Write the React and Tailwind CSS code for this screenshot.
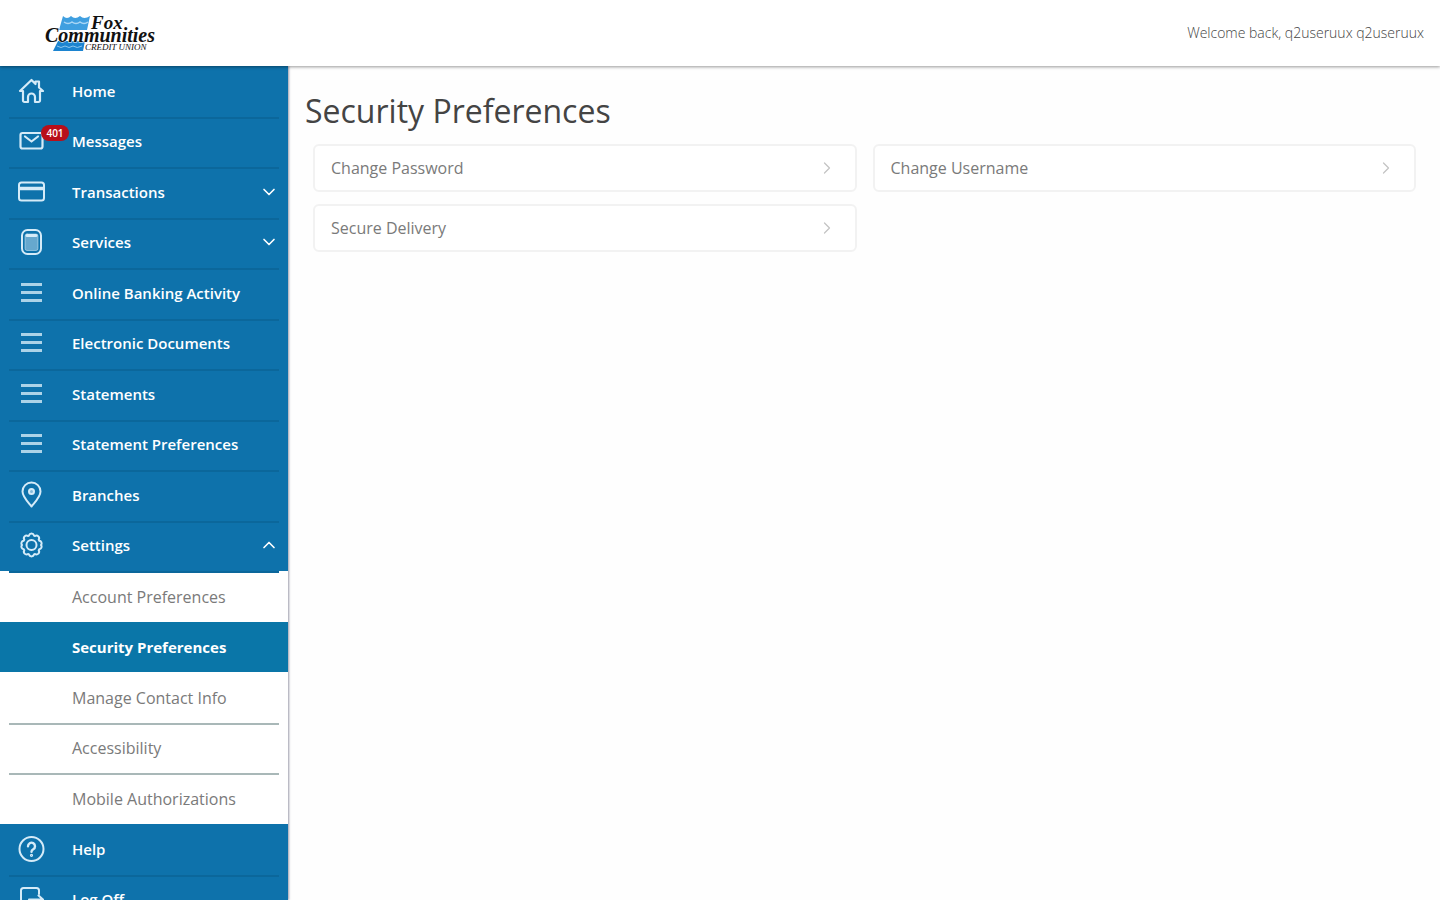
import React from 'react';
import clsx from 'clsx';
import { ChevronDown, ChevronRight, ChevronUp } from 'lucide-react';

const Icon = ({ children }) => (
  <svg
    viewBox="0 0 28 28"
    className="w-7 h-7 shrink-0"
    fill="none"
    stroke="currentColor"
    strokeWidth="2"
    strokeLinecap="round"
    strokeLinejoin="round"
    aria-hidden="true"
  >
    {children}
  </svg>
);

const HomeIcon = () => (
  <Icon>
    <path d="M3 14 14.500 3l4 4V4.500h3.500V10.500L26 14h-3v9.500a1.500 1.500 0 0 1-1.500 1.500H18v-5a3.500 3.500 0 0 0-7 0v5H7.500A1.500 1.500 0 0 1 6 23.500V14Z" strokeWidth="2.200" />
  </Icon>
);

const MailIcon = () => (
  <Icon>
    <rect x="3.500" y="6" width="22" height="15.500" rx="2" strokeWidth="2.200" />
    <path d="m8 9.500 6.500 5 6.500-5" strokeWidth="2.200" />
  </Icon>
);

const CardIcon = () => (
  <Icon>
    <rect x="2" y="4.500" width="25" height="18" rx="2.500" />
    <path d="M3 10.500h23" strokeWidth="3.500" />
  </Icon>
);

const CalculatorIcon = () => (
  <Icon>
    <rect x="5" y="2" width="19" height="24" rx="5.500" />
    <rect x="8" y="6" width="13" height="16.500" rx="2" fill="currentColor" fillOpacity="0.45" strokeWidth="1" strokeOpacity="0.5" />
    <path d="M10 7.500h9" strokeWidth="3" />
  </Icon>
);

const ListIcon = () => (
  <Icon>
    <path d="M4 5.500h21M4 13.500h21M4 21.500h21" strokeLinecap="butt" strokeWidth="3" strokeOpacity="0.8" />
  </Icon>
);

const PinIcon = () => (
  <Icon>
    <path d="M14.500 25.500C10 20 5.500 15.500 5.500 10.500a9 9 0 0 1 18 0c0 5-4.500 9.500-9 15Z" />
    <circle cx="14.500" cy="10.500" r="2.500" fill="currentColor" fillOpacity="0.6" />
  </Icon>
);

// Eight rounded teeth around a ring and a small hub
const GearIcon = () => (
  <Icon>
    <path
      d="M12 4.500a2.600 2.600 0 0 1 5 0l1.100.5a2.600 2.600 0 0 1 3.600 3.600l.5 1.100a2.600 2.600 0 0 1 1.800 4.300a2.600 2.600 0 0 1-1.800 4.300l-.5 1.100a2.600 2.600 0 0 1-3.600 3.600l-1.100.5a2.600 2.600 0 0 1-5 0l-1.100-.5a2.600 2.600 0 0 1-3.600-3.600l-.5-1.100a2.600 2.600 0 0 1-1.800-4.300a2.600 2.600 0 0 1 1.800-4.300l.5-1.100a2.600 2.600 0 0 1 3.600-3.600Z"
      strokeWidth="2"
    />
    <circle cx="14.500" cy="14" r="5" strokeWidth="2" />
  </Icon>
);

const HelpIcon = () => (
  <Icon>
    <circle cx="14.500" cy="14" r="12" />
    <path d="M11 11.200a3.500 3.500 0 1 1 5.300 3c-1.200.7-1.800 1.200-1.800 2.600" strokeWidth="2.400" />
    <circle cx="14.500" cy="20.300" r="0.600" />
  </Icon>
);

const LogOffIcon = () => (
  <Icon>
    <path d="M22 9V5.500A2.500 2.500 0 0 0 19.500 3h-13A2.500 2.500 0 0 0 4 5.500v17A2.500 2.500 0 0 0 6.500 25h13a2.500 2.500 0 0 0 2.500-2.500V20" />
    <path d="M12 14.500h14M21.500 10.500l4.500 4-4.500 4" />
  </Icon>
);

const navItems = [
  { label: 'Home', icon: HomeIcon, first: true },
  { label: 'Messages', icon: MailIcon, badge: '401' },
  { label: 'Transactions', icon: CardIcon, expandable: true },
  { label: 'Services', icon: CalculatorIcon, expandable: true },
  { label: 'Online Banking Activity', icon: ListIcon },
  { label: 'Electronic Documents', icon: ListIcon },
  { label: 'Statements', icon: ListIcon },
  { label: 'Statement Preferences', icon: ListIcon },
  { label: 'Branches', icon: PinIcon },
  { label: 'Settings', icon: GearIcon, expandable: true, open: true },
];

const settingsItems = [
  { label: 'Account Preferences', border: 'border-[#0b679b]' },
  { label: 'Security Preferences', active: true, border: 'border-transparent' },
  { label: 'Manage Contact Info', border: 'border-transparent' },
  { label: 'Accessibility', border: 'border-[#a9b8b8]' },
  { label: 'Mobile Authorizations', border: 'border-[#a9b8b8]' },
];

const footerItems = [
  { label: 'Help', icon: HelpIcon, first: true },
  { label: 'Log Off', icon: LogOffIcon },
];

const preferences = ['Change Password', 'Change Username', 'Secure Delivery'];

const Logo = () => (
  <svg viewBox="0 0 112 40" className="w-28 h-10" role="img" aria-label="Fox Communities Credit Union">
    <path d="M19 3q4 4 8 0q4 4 9 0q4 4 10 0l-3 14H15Z" fill="#3f9fe0" />
    <path d="M20 9q4 3 8 0q4 3 8 0q4 3 8 0" fill="none" stroke="#a9d6f5" strokeWidth="1.500" />
    <path d="M14 28h27l-2 10H9Z" fill="#1c84d0" />
    <path d="M13 33q4 3 8 0q4 3 8 0q4 3 9 0" fill="none" stroke="#8cc6ee" strokeWidth="1" />
    <g className="font-['Liberation_Serif',serif]" fontStyle="italic" fill="#111">
      <text x="47" y="16" fontSize="19" fontWeight="700">Fox</text>
      <text x="1" y="29" fontSize="20" fontWeight="700" stroke="#fff" strokeWidth="1" paintOrder="stroke">Communities</text>
      <text x="41" y="37" fontSize="9">CREDIT UNION</text>
    </g>
  </svg>
);

const NavItem = ({ item }) => {
  const ItemIcon = item.icon;
  return (
    <li className="h-[51px] even:h-[50px] px-[9px]">
      <a
        href="#"
        className={clsx(
          'relative flex h-full items-center border-t-2 pb-1 pl-2 text-white',
          item.first ? 'border-transparent' : 'border-[#0b679b]'
        )}
      >
        <span className="flex w-[55px] text-[#d5ebf8]">
          <ItemIcon />
        </span>
        <span className="flex-1 text-[15px] leading-5 font-semibold">{item.label}</span>
        {item.badge && (
          <span className="absolute left-8 top-1.5 flex h-4 w-7 items-center justify-center rounded-full bg-[#b80f1a] text-[10px] font-semibold">
            {item.badge}
          </span>
        )}
        {item.expandable && (item.open ? <ChevronUp size={20} /> : <ChevronDown size={20} />)}
      </a>
    </li>
  );
};

const SubNavItem = ({ item }) => (
  <li className={clsx('h-[51px] even:h-[50px] px-[9px]', item.active ? 'bg-[#0a76a8]' : 'bg-white')}>
    <a
      href="#"
      aria-current={item.active ? 'page' : undefined}
      className={clsx(
        'flex h-full items-center border-t-2 pb-[2px] pl-[63px] leading-5',
        item.active ? 'text-[15px] font-bold text-white' : 'text-base text-[#7a7a7a]',
        item.border
      )}
    >
      {item.label}
    </a>
  </li>
);

const Sidebar = () => (
  <nav aria-label="Main" className="relative w-72 shrink-0 bg-[#0e72ab] shadow-[1px_0_2px_rgba(60,60,90,0.5)]">
    <ul>
      {navItems.map((item) => (
        <NavItem key={item.label} item={item} />
      ))}
    </ul>
    <ul>
      {settingsItems.map((item) => (
        <SubNavItem key={item.label} item={item} />
      ))}
    </ul>
    <ul>
      {footerItems.map((item) => (
        <NavItem key={item.label} item={item} />
      ))}
    </ul>
  </nav>
);

export default function App() {
  return (
    <div className="flex h-screen flex-col overflow-hidden bg-white font-['Open_Sans',sans-serif]">
      <header className="relative z-10 flex h-[66px] shrink-0 items-center justify-between bg-white pl-11 pr-4 shadow-[0_1px_3px_rgba(0,0,0,0.4)]">
        <a href="#">
          <Logo />
        </a>
        <p className="text-sm leading-5 font-light text-[#444]">Welcome back, q2useruux q2useruux</p>
      </header>

      <div className="flex min-h-0 flex-1">
        <Sidebar />
        <main className="min-w-0 flex-1 bg-[#fefefe] pl-[17px] pr-6 pt-6">
          <h1 className="text-[32px] leading-[42px] text-[#444]">Security Preferences</h1>
          <ul className="mt-3 grid grid-cols-2 gap-x-4 gap-y-3 pl-2">
            {preferences.map((label) => (
              <li key={label}>
                <a
                  href="#"
                  className="flex h-12 items-center justify-between rounded-md border-2 border-[#f2f2f2] bg-white pl-4 pr-[18px] text-base leading-5 text-[#7a7a7a]"
                >
                  {label}
                  <ChevronRight size={20} strokeWidth={1.5} className="text-[#c4c4c4]" />
                </a>
              </li>
            ))}
          </ul>
        </main>
      </div>
    </div>
  );
}
